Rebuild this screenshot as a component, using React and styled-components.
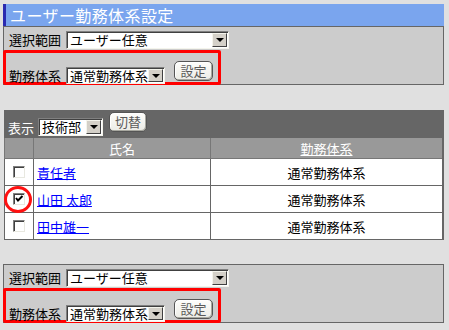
import React from "react";
import styled, { createGlobalStyle } from "styled-components";

const GlobalStyle = createGlobalStyle`
body {
  margin: 0;
  background: #e0e0e0;
  font-family: "Noto Sans CJK JP", "DejaVu Sans", sans-serif;
  font-size: 13px;
  color: #000;
}
`;

const Page = styled.div`
width: 441px;
padding: 4px 0 0 3px;
`;

const Title = styled.div`
height: 22px;
line-height: 22px;
background: #7aa5ee;
border-left: 3px solid #2a2ab0;
padding-left: 4px;
color: #fff;
font-size: 16px;
letter-spacing: 0.4px;
`;

const Panel = styled.div`
height: 57px;
border: 1px solid #666;
background: #cccccc;
margin-top: ${(p) => p.gap || 0}px;
`;

const Row = styled.div`
display: flex;
align-items: flex-start;
height: 23px;
padding: 4px 0 0 5px;
box-sizing: border-box;
gap: 5px;
`;

const Marked = styled.div`
display: flex;
align-items: flex-start;
width: 218px;
height: 35px;
box-sizing: border-box;
margin-left: -1px;
border: 3px solid #ff0000;
border-radius: 2px;
padding: 4px 0 0 3px;
`;

const Label = styled.span`
line-height: 18px;
white-space: nowrap;
color: ${(p) => (p.light ? "#fff" : "#000")};
margin-top: ${(p) => p.top || 0}px;
margin-right: ${(p) => p.right || 0}px;
`;

const SelectBox = styled.div`
display: flex;
align-items: stretch;
width: ${(p) => p.w}px;
height: ${(p) => p.h || 18}px;
box-sizing: border-box;
margin-top: ${(p) => p.top || 0}px;
border-top: 1px solid #808080;
border-left: 1px solid #808080;
border-right: 1px solid #f4f4ec;
border-bottom: 1px solid #f4f4ec;
background: #fff;
box-shadow: inset 1px 1px 0 #404040;
`;

const SelectText = styled.span`
flex: 1;
padding-left: 3px;
line-height: ${(p) => p.h - 2}px;
white-space: nowrap;
`;

const Arrow = styled.span`
width: 15px;
flex: none;
margin: 1px 1px 1px 0;
background: #d4d0c8;
box-sizing: border-box;
border-top: 1px solid #f4f4ec;
border-left: 1px solid #f4f4ec;
border-right: 1px solid #404040;
border-bottom: 1px solid #404040;
display: flex;
align-items: center;
justify-content: center;
&::after {
  content: "";
  border-left: 4px solid transparent;
  border-right: 4px solid transparent;
  border-top: 4px solid #000;
}
`;

const Button = styled.button`
width: ${(p) => p.w || 39}px;
height: 20px;
margin-top: ${(p) => p.top || 0}px;
margin-left: ${(p) => p.left || 0}px;
padding: 0;
font-family: inherit;
font-size: 13px;
line-height: 18px;
color: #5a5a5a;
background: linear-gradient(#fdfdfb, #ecece6);
border: 1px solid #555;
border-radius: 5px;
box-shadow: inset -1px -1px 0 #a8a8a0, inset 1px 1px 0 #fff;
`;

const Select = ({ value, w, h = 18, top }) => (
  <SelectBox w={w} h={h} top={top}>
    <SelectText h={h}>{value}</SelectText>
    <Arrow />
  </SelectBox>
);

const ListBox = styled.div`
width: 440px;
margin: 25px 0 0 1px;
`;

const Toolbar = styled.div`
display: flex;
align-items: flex-start;
height: 28px;
background: #666;
padding-left: 4px;
box-sizing: border-box;
`;

const Table = styled.table`
width: 100%;
border-collapse: collapse;
table-layout: fixed;
background: #fff;
border-right: 2px solid #666;
`;

const Th = styled.th`
height: 20px;
padding: 0;
background: #999;
border: 1px solid #777;
border-top: none;
color: #fff;
font-weight: normal;
text-align: center;
width: ${(p) => (p.w ? p.w + "px" : "auto")};
`;

const SortLink = styled.span`
text-decoration: underline;
`;

const Td = styled.td`
height: 26px;
padding: 0 0 0 ${(p) => (p.pad ? 3 : 0)}px;
border: 1px solid #666;
text-align: ${(p) => p.align || "left"};
position: relative;
`;

const NameLink = styled.a`
color: #0000ff;
text-decoration: underline;
`;

const Check = styled.span`
display: block;
width: 12px;
height: 12px;
margin: 0 auto 0 8px;
box-sizing: border-box;
background: #fff;
border-top: 1px solid #808080;
border-left: 1px solid #808080;
border-right: 1px solid #e8e8e0;
border-bottom: 1px solid #e8e8e0;
box-shadow: inset 1px 1px 0 #404040;
position: relative;
`;

const Circle = styled.span`
position: absolute;
left: -1px;
top: 0px;
width: 28px;
height: 27px;
box-sizing: border-box;
border: 3px solid #ff1010;
border-radius: 50%;
`;

const rows = [
  { name: "責任者", checked: false },
  { name: "山田 太郎", checked: true },
  { name: "田中雄一", checked: false },
];

const SettingPanel = ({ gap }) => (
  <Panel gap={gap}>
    <Row>
      <Label top={0}>選択範囲</Label>
      <Select value="ユーザー任意" w={163} />
    </Row>
    <Marked>
      <Label top={10} right={5}>勤務体系</Label>
      <Select value="通常勤務体系" w={99} h={17} top={10} />
      <Button top={4} left={9}>設定</Button>
    </Marked>
  </Panel>
);

const App = () => (
  <Page>
    <GlobalStyle />
    <Title>ユーザー勤務体系設定</Title>
    <SettingPanel />
    <ListBox>
      <Toolbar>
        <Label light top={9} right={4}>表示</Label>
        <Select value="技術部" w={65} top={8} />
        <Button w={38} top={2} left={6}>切替</Button>
      </Toolbar>
      <Table>
        <thead>
          <tr>
            <Th w={28}></Th>
            <Th w={176}>氏名</Th>
            <Th><SortLink>勤務体系</SortLink></Th>
          </tr>
        </thead>
        <tbody>
          {rows.map((r) => (
            <tr key={r.name}>
              <Td>
                <Check>
                  {r.checked && (
                    <svg width="10" height="10" viewBox="0 0 10 10" style={{ position: "absolute", left: 0, top: 0 }}>
                      <path d="M2 4 L4 6.5 L8.5 2" stroke="#000" strokeWidth="2" fill="none" />
                    </svg>
                  )}
                </Check>
                {r.checked && <Circle />}
              </Td>
              <Td pad><NameLink href="#">{r.name}</NameLink></Td>
              <Td align="center">通常勤務体系</Td>
            </tr>
          ))}
        </tbody>
      </Table>
    </ListBox>
    <SettingPanel gap={24} />
  </Page>
);

export default App;
